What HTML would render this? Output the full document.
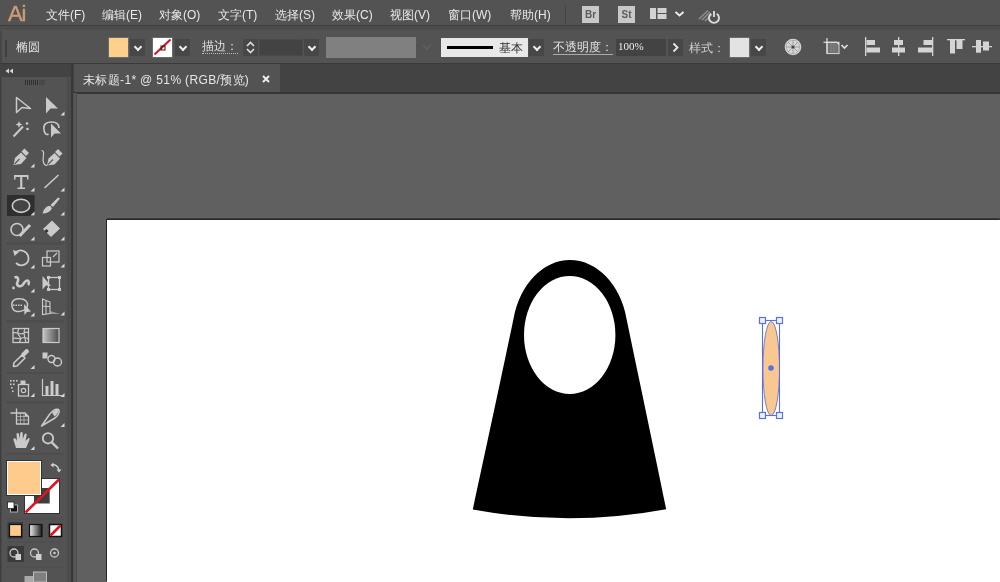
<!DOCTYPE html>
<html><head><meta charset="utf-8">
<style>
*{margin:0;padding:0;box-sizing:border-box}
html,body{width:1000px;height:582px;overflow:hidden;background:#606060;font-family:"Liberation Sans",sans-serif}
.abs{position:absolute}
.mi,.lbl,.tx{will-change:transform}
#menubar{left:0;top:0;width:1000px;height:26px;background:#535353}
#menusep{left:0;top:25px;width:1000px;height:6px;background:#4d4d4d;border-top:1px solid #3e3e3e;border-bottom:1px solid #3a3a3a}
#ctrl{left:0;top:30px;width:1000px;height:34px;background:#535353}
#ctrlsep{left:0;top:63px;width:1000px;height:1px;background:#3a3a3a}
.mi{position:absolute;top:7px;font-size:12px;color:#e8e8e8;white-space:nowrap;letter-spacing:0px}
#tabbar{left:72px;top:64px;width:928px;height:30px;background:#434343}
#tab{left:73px;top:64px;width:207px;height:28px;background:#535353;border-left:1px solid #4a4a4a}
#tabline{left:72px;top:92px;width:928px;height:2px;background:#363636}
#tools{left:0;top:64px;width:72px;height:518px;background:#535353}
#toolhdr{left:0;top:64px;width:71px;height:13px;background:#434343}
#canvas{left:72px;top:94px;width:928px;height:489px;background:#606060}
#artboard{left:107px;top:220px;width:893px;height:362px;background:#fff;box-shadow:-1px -1px 0 #262626, 0 -2px 0 #3c3c3c}
.dd{position:absolute;top:39px;width:15px;height:17px;background:#474747}
.dd::after{content:"";position:absolute;left:5px;top:5px;width:4px;height:4px;border-right:2px solid #ececec;border-bottom:2px solid #ececec;transform:rotate(45deg)}
.ul{border-bottom:1px dotted #bbb;line-height:13px}
.lbl{position:absolute;font-size:12px;color:#e0e0e0;white-space:nowrap}
</style></head><body>
<div id="menubar" class="abs"></div>
<div class="abs tx" style="left:8px;top:1px;font-size:22px;line-height:25px;color:#d09a78;font-weight:normal;letter-spacing:-1.2px;-webkit-text-stroke:0.4px #d09a78">Ai</div>
<div class="mi" style="left:46px">文件(F)</div>
<div class="mi" style="left:102px">编辑(E)</div>
<div class="mi" style="left:159px">对象(O)</div>
<div class="mi" style="left:218px">文字(T)</div>
<div class="mi" style="left:275px">选择(S)</div>
<div class="mi" style="left:332px">效果(C)</div>
<div class="mi" style="left:390px">视图(V)</div>
<div class="mi" style="left:448px">窗口(W)</div>
<div class="mi" style="left:510px">帮助(H)</div>
<div id="menusep" class="abs"></div>
<div id="ctrl" class="abs"></div>
<div id="ctrlsep" class="abs"></div>

<!-- control bar -->
<div class="abs" style="left:0;top:31px;width:2px;height:32px;background:#474747"></div>
<div class="abs" style="left:5px;top:40px;width:2px;height:17px;background:#3f3f3f"></div>
<div class="lbl" style="left:16px;top:39px">椭圆</div>
<div class="abs" style="left:108px;top:37px;width:21px;height:21px;background:#6a6a6a;padding:1px"><div style="width:19px;height:19px;background:#fdd08c"></div></div>
<div class="dd" style="left:130px"></div>
<div class="abs" style="left:152px;top:37px;width:21px;height:21px;background:#6a6a6a;padding:1px"><div style="width:19px;height:19px;background:#fff"></div></div>
<svg class="abs" style="left:152px;top:37px" width="21" height="21"><line x1="2.5" y1="17.5" x2="18.5" y2="2.5" stroke="#d8101c" stroke-width="2"/><rect x="9" y="9" width="4" height="4" fill="none" stroke="#3a1010" stroke-width="1"/></svg>
<div class="dd" style="left:175px"></div>
<div class="lbl ul" style="left:202px;top:40px">描边：</div>
<div class="abs" style="left:243px;top:39px;width:15px;height:17px;background:#474747"></div>
<svg class="abs" style="left:243px;top:39px" width="15" height="17"><polyline points="4,7 7.5,3.5 11,7" fill="none" stroke="#e0e0e0" stroke-width="1.6"/><polyline points="4,10 7.5,13.5 11,10" fill="none" stroke="#e0e0e0" stroke-width="1.6"/></svg>
<div class="abs" style="left:259px;top:39px;width:44px;height:17px;background:#434343;border:1px solid #4a4a4a"></div>
<div class="dd" style="left:304px"></div>
<div class="abs" style="left:326px;top:37px;width:90px;height:21px;background:#808080"></div>
<svg class="abs" style="left:420px;top:42px" width="14" height="10"><polyline points="3,3 7,7 11,3" fill="none" stroke="#5e5e5e" stroke-width="1.6"/></svg>
<div class="abs" style="left:441px;top:38px;width:87px;height:19px;background:#e8e8e8"></div>
<div class="abs" style="left:447px;top:46px;width:46px;height:3px;background:#000"></div>
<div class="abs tx" style="left:499px;top:40px;font-size:12px;color:#333;white-space:nowrap">基本</div>
<div class="dd" style="left:529px"></div>
<div class="lbl" style="left:553px;top:40px;border-bottom:1px solid #a8a8a8;line-height:14px">不透明度：</div>
<div class="abs" style="left:616px;top:39px;width:50px;height:17px;background:#434343"></div>
<div class="abs tx" style="left:618px;top:40px;font-size:11px;color:#eee;white-space:nowrap;font-family:'Liberation Serif',serif">100%</div>
<div class="abs" style="left:668px;top:39px;width:15px;height:17px;background:#474747"></div>
<svg class="abs" style="left:668px;top:39px" width="15" height="17"><polyline points="5.5,4.5 9.5,8.5 5.5,12.5" fill="none" stroke="#e8e8e8" stroke-width="1.8"/></svg>
<div class="lbl" style="left:689px;top:40px;color:#cfcfcf">样式：</div>
<div class="abs" style="left:729px;top:37px;width:21px;height:21px;background:#6a6a6a;padding:1px"><div style="width:19px;height:19px;background:#e3e3e3"></div></div>
<div class="dd" style="left:751px"></div>

<!-- right ctrl icons -->
<svg class="abs" style="left:780px;top:34px" width="220" height="28">
 <g transform="translate(13,13)">
  <circle r="8.3" fill="#d6d6d6"/>
  <circle r="6.8" fill="none" stroke="#a8a8a8" stroke-width="0.7"/>
  <g stroke="#a0a0a0" stroke-width="1">
   <line x1="0" y1="-7" x2="0" y2="7"/><line x1="-7" y1="0" x2="7" y2="0"/>
   <line x1="-5" y1="-5" x2="5" y2="5"/><line x1="-5" y1="5" x2="5" y2="-5"/>
  </g>
  <circle r="1.6" fill="#444"/>
 </g>
 <!-- transform icon -->
 <g transform="translate(44,0)">
  <rect x="3" y="8.3" width="12" height="11.3" fill="#6e6e6e" stroke="#d8d8d8" stroke-width="1"/>
  <path d="M5 11 H13 M5 14 H13 M5 17 H13 M7 9 V19 M10 9 V19" stroke="#888" stroke-width="0.7"/>
  <line x1="-0.5" y1="8.3" x2="13" y2="8.3" stroke="#e0e0e0" stroke-width="1.2"/>
  <line x1="3" y1="4" x2="3" y2="19.6" stroke="#e0e0e0" stroke-width="1.2"/>
  <path d="M12 8.3 L15 11.3 L15 8.3 Z" fill="#e0e0e0"/>
  <polyline points="17.5,11 20.5,14 23.5,11" fill="none" stroke="#e0e0e0" stroke-width="1.7"/>
 </g>
 <!-- align left -->
 <g fill="#d4d4d4">
  <rect x="85" y="3" width="1.3" height="19"/>
  <rect x="86.5" y="6" width="8.5" height="5"/>
  <rect x="86.5" y="13.5" width="13.5" height="5"/>
  <rect x="118" y="3" width="1.3" height="19"/>
  <rect x="114" y="6" width="9" height="5"/>
  <rect x="112" y="13.5" width="13" height="5"/>
  <rect x="152" y="3" width="1.3" height="19"/>
  <rect x="143.5" y="6" width="8.5" height="5"/>
  <rect x="138" y="13.5" width="14" height="5"/>
  <rect x="167" y="5" width="18" height="1.3"/>
  <rect x="170" y="6" width="5" height="13.5"/>
  <rect x="176.5" y="6" width="6" height="9"/>
  <rect x="192" y="12" width="20" height="1.3"/>
  <rect x="196" y="6" width="5" height="12.7"/>
  <rect x="203" y="7.5" width="6" height="9"/>
 </g>
</svg>
<!-- menu right icons -->
<div class="abs" style="left:565px;top:5px;width:1px;height:19px;background:#454545"></div>
<div class="abs tx" style="left:582px;top:6px;width:17px;height:17px;background:#c8c8c8;color:#5c5c5c;font-size:10px;font-weight:bold;text-align:center;line-height:17px">Br</div>
<div class="abs tx" style="left:618px;top:6px;width:17px;height:17px;background:#c8c8c8;color:#5c5c5c;font-size:10px;font-weight:bold;text-align:center;line-height:17px">St</div>
<svg class="abs" style="left:648px;top:5px" width="80" height="22">
 <rect x="2" y="3" width="6" height="11" fill="#d2d2d2"/>
 <rect x="9.5" y="3" width="9" height="5" fill="#d2d2d2"/>
 <rect x="9.5" y="9" width="9" height="5" fill="#d2d2d2"/>
 <polyline points="27.5,7 31.5,10.5 35.5,7" fill="none" stroke="#ececec" stroke-width="2"/>
 <path d="M51 14 L60 5.5 M54 15 L62 7 M57 16 L63.5 9.5" stroke="#8c8c8c" stroke-width="1.7"/>
 <path d="M63.3 8.7 A5 5 0 1 0 68.7 8.7" fill="none" stroke="#dadada" stroke-width="1.9"/>
 <line x1="66" y1="6" x2="66" y2="12" stroke="#dadada" stroke-width="1.9"/>
</svg>

<div id="canvas" class="abs"></div>
<div id="tabbar" class="abs"></div>
<div id="tab" class="abs"></div>
<div id="tabline" class="abs"></div>
<div class="abs tx" style="left:83px;top:72px;font-size:12px;color:#e6e6e6;white-space:nowrap;letter-spacing:0.35px">未标题-1* @ 51% (RGB/预览)</div>
<svg class="abs" style="left:261px;top:74px" width="10" height="10"><path d="M2 2 L8 8 M8 2 L2 8" stroke="#ececec" stroke-width="2"/></svg>
<div id="artboard" class="abs"></div>
<!-- tool panel -->
<svg class="abs" style="left:0;top:0" width="80" height="582">
 <rect x="0" y="64" width="72" height="518" fill="#535353"/>
 <rect x="0" y="64" width="71" height="13" fill="#434343"/>
 <rect x="0" y="77" width="1.5" height="505" fill="#3f3f3f"/>
 <rect x="66.5" y="77" width="4.5" height="505" fill="#4c4c4c"/>
 <rect x="71" y="64" width="2.5" height="518" fill="#393939"/>
 <rect x="73.5" y="93" width="2.5" height="489" fill="#575757"/>
 <rect x="76" y="93" width="1" height="489" fill="#4d4d4d"/>
 <!-- header chevrons -->
 <path d="M9 68.5 L5.5 71 L9 73.5 Z M13 68.5 L9.5 71 L13 73.5 Z" fill="#d8d8d8"/>
 <!-- grip -->
 <g fill="#2f2f2f"><rect x="25" y="80" width="1" height="5"/><rect x="27" y="80" width="1" height="5"/><rect x="29" y="80" width="1" height="5"/><rect x="31" y="80" width="1" height="5"/><rect x="33" y="80" width="1" height="5"/><rect x="35" y="80" width="1" height="5"/><rect x="37" y="80" width="1" height="5"/></g>
 <rect x="39" y="80" width="6" height="5" fill="#484848"/>
 <!-- separators -->
 <g fill="#4d4d4d">
  <rect x="6" y="242" width="58" height="2.5"/>
  <rect x="6" y="320" width="58" height="2.5"/>
  <rect x="6" y="372" width="58" height="2"/>
  <rect x="6" y="401" width="58" height="2.5"/>
  <rect x="6" y="453" width="58" height="2"/>
  <rect x="6" y="518" width="58" height="1.5" fill="#4f4f4f"/>
  <rect x="6" y="541" width="58" height="1.5" fill="#4f4f4f"/>
  <rect x="6" y="566" width="58" height="1.5" fill="#4f4f4f"/>
 </g>
 <!-- selected ellipse bg -->
 <rect x="7" y="195" width="27.5" height="21" fill="#2e2e2e"/>
 <g fill="#cacaca" stroke="#cacaca">
  <!-- row1 selection -->
  <path d="M16.5 97.5 L16.5 112.5 L22 107.5 L30.5 108.5 Z" fill="none" stroke-width="1.5" stroke-linejoin="round"/>
  <path d="M46 97 L46 113.5 L50.5 108.5 L58 108.5 Z" stroke="none"/>
  <!-- row2 magic wand -->
  <line x1="13.5" y1="136.5" x2="23" y2="126.5" stroke-width="2"/>
  <path d="M19 121 l1 2.5 2.5 1 -2.5 1 -1 2.5 -1 -2.5 -2.5 -1 2.5 -1z" stroke="none"/>
  <circle cx="27" cy="123.5" r="1.3" stroke="none"/><circle cx="27.5" cy="129" r="1.3" stroke="none"/>
  <!-- lasso -->
  <path d="M44 129 C43 124 47 122 51.5 122 C56 122 59 124 59 128" fill="none" stroke-width="1.6"/>
  <path d="M44 129 C44 133 46 135.5 48.5 134" fill="none" stroke-width="1.6"/>
  <path d="M51 123.5 L51 137.5 L54.5 133.5 L61 133.5 Z" stroke="none"/>
  <!-- row3 pen -->
  <path d="M13.5 165 L15 158 L21 152.5 L26.5 158 L21 164 Z" stroke="none"/>
  <path d="M21.5 151.5 L24.5 148.5 L29 153 L26 156 Z" stroke="none"/>
  <line x1="14.5" y1="164" x2="19.5" y2="159" stroke="#555" stroke-width="1.1"/>
  <path d="M47 165.5 C42 165 43 158 43.5 155 C44 152 43 150.5 41.5 150.5" fill="none" stroke-width="1.2"/>
  <path d="M47 165.5 L48.5 158.5 L54.5 153 L60 158.5 L54.5 164.5 Z" stroke="none"/>
  <path d="M55 152 L58 149 L62.5 153.5 L59.5 156.5 Z" stroke="none"/>
  <line x1="48" y1="164.5" x2="53" y2="159.5" stroke="#555" stroke-width="1.1"/>
  <!-- row4 type / line -->
  <path d="M14 175 H28.5 V179.5 H27 V177 H22.3 V187.6 H25 V189 H17.5 V187.6 H20.2 V177 H15.5 V179.5 H14 Z" stroke="none"/>
  <line x1="44.5" y1="188" x2="58.5" y2="175" stroke-width="1.6"/>
  <!-- row5 ellipse / brush -->
  <ellipse cx="21" cy="205.8" rx="8.7" ry="6.6" fill="#444" stroke-width="1.6"/>
  <path d="M60 198.5 L53 207 L50.5 205 L58 197.5 Z" stroke="none"/>
  <path d="M42.5 213.5 C44 208 47 205.5 50.5 206 L52 208.5 C50 212 47 213.5 42.5 213.5 Z" stroke="none"/>
  <!-- row6 shaper / eraser -->
  <circle cx="17" cy="229.5" r="6" fill="none" stroke-width="1.6"/>
  <line x1="19.5" y1="236" x2="30" y2="225" stroke-width="3"/>
  <path d="M52 220.5 L60 228.5 L51 237 L43 229 Z" stroke="none"/>
  <rect x="45" y="229.5" width="3" height="3" fill="#333" stroke="none" transform="rotate(45 46.5 231)"/>
  <!-- row7 rotate / scale -->
  <path d="M15 253 C20 248 28 251 28.5 258 C29 264 21 268 16 263" fill="none" stroke-width="1.8"/>
  <path d="M13 250 L19 252 L14.5 256 Z" stroke="none"/>
  <rect x="47" y="251" width="12" height="11" fill="none" stroke-width="1.2"/>
  <rect x="42.5" y="257.5" width="8" height="8.5" fill="none" stroke-width="1.2"/>
  <line x1="53" y1="257" x2="57" y2="253" stroke-width="1.2"/>
  <!-- row8 warp / free transform -->
  <path d="M14.5 277.5 C18 276 19 279 17.5 282 C16 285 19 287.5 22 285.5 C24.5 283.5 25 280 27.5 280.5 C29.5 281 29 284 28 285" fill="none" stroke-width="2.6"/>
  <circle cx="13.5" cy="288" r="1.4" stroke="none"/>
  <path d="M42.5 276 L42.5 289.5 L46 285.5 L51 286 Z" stroke="none"/>
  <rect x="48.5" y="277.5" width="11" height="12" fill="none" stroke-width="1.3"/>
  <g stroke="none"><rect x="47" y="276" width="3" height="3"/><rect x="58" y="276" width="3" height="3"/><rect x="58" y="288" width="3" height="3"/><rect x="47" y="288" width="3" height="3"/></g>
  <!-- row9 shape builder / perspective -->
  <path d="M11.8 305 C11.5 300 16 298.5 20 298.8 C25 299 28 301.5 27.5 305.5 C27 309.5 22 312 17 311.5 C13 311 12 308 11.8 305 Z" fill="none" stroke-width="1.5"/>
  <path d="M13 305.2 H23" stroke-width="1.4" stroke-dasharray="1.5 1" fill="none"/>
  <path d="M24 304 L24.5 315 L27 312 L31 311.5 Z" stroke="none"/>
  <path d="M42.5 299 L50 302 L50 313.5 L42.5 314.5 Z M42.5 306 L50 306.5 M46 300 L46 314" fill="none" stroke-width="1.1"/>
  <path d="M50 311 L60 314 L50 314 Z" stroke="none" opacity="0.6"/>
  <!-- row10 mesh / gradient -->
  <rect x="13" y="328.5" width="15.5" height="14" fill="none" stroke-width="1.3"/>
  <path d="M13 333 C17 331 20 336 24 333 C26 331.5 27 332 28.5 333 M19 328.5 C17 332 18 335 20 337 C21.5 339 20 341 19.5 342.5 M13 338.5 C16 337 19 340 22 338 C24.5 336.5 26 338 28.5 339 M25 328.5 C23 332 24 336 26 342.5" fill="none" stroke-width="1.2"/>
 </g>
 <defs><linearGradient id="gtool" x1="0" x2="1"><stop offset="0" stop-color="#c4c4c4"/><stop offset="1" stop-color="#4a4a4a"/></linearGradient>
 <linearGradient id="gmode" x1="0" x2="1"><stop offset="0" stop-color="#f0f0f0"/><stop offset="1" stop-color="#1a1a1a"/></linearGradient></defs>
 <rect x="43" y="328.5" width="16" height="14" fill="url(#gtool)" stroke="#cacaca" stroke-width="1.2"/>
 <g fill="#cacaca" stroke="#cacaca">
  <!-- row11 eyedropper / blend -->
  <path d="M13.5 366.5 L13.8 363 L22 355 L25 358 L17 366 Z" fill="none" stroke-width="1.6" stroke-linejoin="round"/>
  <path d="M21 354 L25.5 349.5 C27 348 30 351 28.5 352.5 L24 357 Z" stroke="none"/>
  <rect x="42.5" y="352.5" width="5" height="6" stroke="none"/>
  <circle cx="51.5" cy="359" r="3.5" fill="none" stroke-width="1.4"/>
  <circle cx="57.5" cy="362" r="4" fill="none" stroke-width="1.4"/>
  <!-- row12 symbol sprayer / graph -->
  <g stroke="none"><rect x="10" y="380" width="1.6" height="1.6"/><rect x="13" y="380" width="1.6" height="1.6"/><rect x="16" y="380" width="1.6" height="1.6"/><rect x="10" y="383.5" width="1.6" height="1.6"/><rect x="13" y="383.5" width="1.6" height="1.6"/><rect x="11" y="387" width="1.6" height="1.6"/><rect x="12" y="390.5" width="1.6" height="1.6"/></g>
  <rect x="18.5" y="384.5" width="10" height="11.5" fill="none" stroke-width="1.3"/>
  <rect x="20.5" y="380.5" width="5" height="4" stroke="none"/>
  <circle cx="23.5" cy="390.5" r="2.2" fill="none" stroke-width="1.2"/>
  <path d="M42.5 379 V395.5 H62" fill="none" stroke-width="1.2"/>
  <rect x="45.5" y="386" width="3" height="9" stroke="none"/>
  <rect x="50.5" y="381" width="3" height="14" stroke="none"/>
  <rect x="55.5" y="384" width="3" height="11" stroke="none"/>
  <!-- row13 artboard / slice -->
  <path d="M16.5 408.5 V424 H28.5 V416.5 L25 413 H10.5" fill="none" stroke-width="1.3"/>
  <path d="M17 416.5 H28 M17 420 H28 M20.5 413 V424 M24 413 V424" fill="none" stroke-width="0.8" opacity="0.8"/>
  <path d="M25 413 V416.5 H28.5 Z" stroke="none"/>
  <path d="M41.5 426 L49.5 414.5 C52.5 410.5 56 408.5 58.5 409.5 C60 411.5 58.5 415 55 418 Z" fill="none" stroke-width="1.5" stroke-linejoin="round"/>
  <path d="M52 412.5 C54 410.5 56.5 409.5 58 410 C59 412 57 414.5 54.5 416.5 Z" stroke="none"/>
  <!-- row14 hand / zoom -->
  <path d="M16 448 L13.5 440 C13 438 15 437.5 16 439 L17 441 L16.5 434 C16.5 432.5 18.5 432.5 19 434 L19.5 439 L20.3 433 C20.5 431.5 22.5 431.5 22.7 433 L22.8 439 L24.5 434.5 C25 433 27 433.5 26.7 435 L25.5 441 L28 438.5 C29 437.5 30 438.5 29.5 440 L26 448 Z" stroke="none"/>
  <circle cx="48" cy="438.3" r="5.2" fill="none" stroke-width="1.8"/>
  <line x1="51.8" y1="442.3" x2="58" y2="448.5" stroke-width="2.4"/>
 </g>
 <!-- corner triangles -->
 <g fill="#d8d8d8">
  <path d="M64.5 111.5 V115.5 H60.5 Z"/>
  <path d="M34.5 163.5 V167.5 H30.5 Z"/>
  <path d="M34.5 187.5 V191.5 H30.5 Z"/><path d="M64.5 187.5 V191.5 H60.5 Z"/>
  <path d="M34.5 211.5 V215.5 H30.5 Z"/><path d="M64.5 211.5 V215.5 H60.5 Z"/>
  <path d="M34.5 236.5 V240.5 H30.5 Z"/><path d="M64.5 236.5 V240.5 H60.5 Z"/>
  <path d="M34.5 264.5 V268.5 H30.5 Z"/><path d="M64.5 263.5 V267.5 H60.5 Z"/>
  <path d="M34.5 288.5 V292.5 H30.5 Z"/>
  <path d="M34.5 312.5 V316.5 H30.5 Z"/><path d="M64.5 311.5 V315.5 H60.5 Z"/>
  <path d="M34.5 365 V369 H30.5 Z"/>
  <path d="M34.5 393 V397 H30.5 Z"/><path d="M64.5 393 V397 H60.5 Z"/>
  <path d="M64.5 423 V427 H60.5 Z"/>
  <path d="M34.5 446 V450 H30.5 Z"/>
 </g>
 <!-- fill / stroke -->
 <rect x="24" y="478" width="36" height="36" fill="#333"/>
 <rect x="25" y="479" width="34" height="34" fill="#fff"/>
 <rect x="34" y="488" width="15.7" height="15.5" fill="#3d3d3d"/>
 <line x1="25.5" y1="512.5" x2="59" y2="479.5" stroke="#e0141e" stroke-width="2.6"/>
 <rect x="6" y="460" width="36" height="36" fill="#333"/>
 <rect x="7" y="461" width="34" height="34" fill="#fdfdfd"/>
 <rect x="8" y="462" width="32" height="32" fill="#fecb8c"/>
 <path d="M52 465 C55 464 58 466 59 470" fill="none" stroke="#d0d0d0" stroke-width="1.3"/>
 <path d="M50.5 465 L53.5 462.5 L53.5 467.5 Z M59 472.5 L56.5 469.5 L61.5 469.5 Z" fill="#d0d0d0"/>
 <rect x="10.5" y="505" width="7" height="7" fill="#111" stroke="#ccc" stroke-width="0.8"/>
 <rect x="7.5" y="502" width="6.5" height="6.5" fill="#fff" stroke="#222" stroke-width="0.8"/>
 <!-- mode buttons -->
 <rect x="7.5" y="522" width="15.5" height="16.5" fill="#3a3a3a"/>
 <rect x="9.5" y="524.5" width="12" height="12" fill="#fecb8c" stroke="#111" stroke-width="1.2"/>
 <rect x="29.5" y="524.5" width="12.5" height="12" fill="url(#gmode)" stroke="#111" stroke-width="1.2"/>
 <rect x="49.5" y="524.5" width="12" height="12" fill="#fff" stroke="#111" stroke-width="1.5"/>
 <line x1="50.5" y1="535.5" x2="60.5" y2="525.5" stroke="#e0141e" stroke-width="2.6"/>
 <!-- screen modes -->
 <rect x="7.5" y="546" width="16.5" height="16" fill="#3a3a3a"/>
 <g fill="none" stroke="#c8c8c8" stroke-width="1.3">
  <circle cx="14" cy="553" r="4"/>
  <circle cx="34.5" cy="553" r="4"/>
  <circle cx="54.5" cy="553" r="4"/>
 </g>
 <rect x="15.5" y="554" width="5.5" height="6" fill="#d0d0d0"/>
 <rect x="36" y="554" width="5.5" height="6" fill="#d0d0d0"/>
 <circle cx="54.5" cy="553" r="1.3" fill="#c8c8c8"/>
 <rect x="24.5" y="576" width="9" height="6" fill="#a8a8a8"/>
 <rect x="33.5" y="572" width="13" height="10" fill="#808080" stroke="#bdbdbd" stroke-width="1"/>
</svg>

<svg class="abs" style="left:0;top:0" width="1000" height="582">
  <path d="M472.8 509.5 C490 430 506 355 513.65 318 A58 76 0 0 1 626.35 318 C634 355 650 430 666.2 509.3 Q569.5 527.2 472.8 509.5 Z" fill="#000"/>
  <ellipse cx="569.7" cy="335" rx="45.7" ry="59" fill="#fff"/>
  <ellipse cx="771.2" cy="368.5" rx="8.3" ry="47" fill="#f8c890" stroke="#6a76b8" stroke-width="0.9"/>
  <rect x="762.5" y="320.5" width="17" height="95" fill="none" stroke="#5a6ee8" stroke-width="1.1"/>
  <g fill="#eef4ff" stroke="#5a6ee8" stroke-width="1.2">
   <rect x="759.5" y="317.5" width="6" height="6"/><rect x="776.5" y="317.5" width="6" height="6"/>
   <rect x="759.5" y="412.5" width="6" height="6"/><rect x="776.5" y="412.5" width="6" height="6"/>
  </g>
  <circle cx="771" cy="368" r="2.8" fill="#5a6ee8"/>
</svg>
</body></html>
